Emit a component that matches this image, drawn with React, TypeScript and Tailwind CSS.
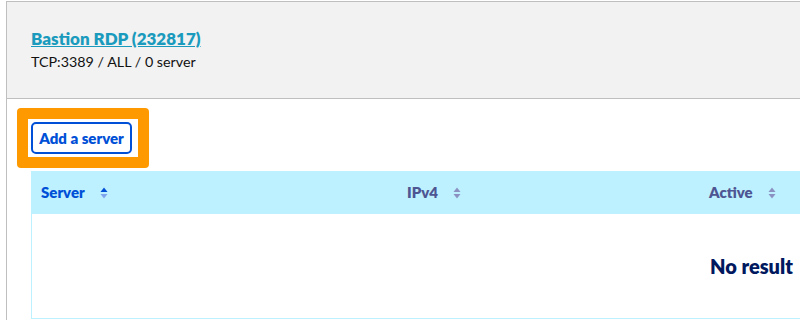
import React from 'react';

const font = { fontFamily: '"Source Sans Pro", Lato, "Liberation Sans", sans-serif' };

function SortIcon({ active }: { active?: boolean }) {
  return (
    <svg width="8" height="12" viewBox="0 0 8 12" className="ml-[15px]">
      <path d="M4 0.5 L7.5 5 H0.5 Z" fill={active ? '#0050d7' : '#8b92c2'} />
      <path d="M4 11.5 L7.5 7 H0.5 Z" fill={active ? '#7ea4ec' : '#8b92c2'} />
    </svg>
  );
}

export default function App() {
  return (
    <div className="h-[320px] w-[800px] overflow-hidden bg-white" style={font}>
      <div className="ml-[6px] mt-px h-[330px] w-[820px] border-l border-t border-[#bfbfbf]">
        {/* Header */}
        <div className="h-[97px] border-b border-[#bfbfbf] bg-[#f2f2f2] pl-[24px] pt-[25px]">
          <a href="#" className="text-[17px] font-extrabold leading-[22px] text-[#1a9bbd] underline">
            Bastion RDP (232817)
          </a>
          <p className="text-[14.3px] leading-[22px] text-[#111]">TCP:3389 / ALL / 0 server</p>
        </div>

        {/* Add button with focus ring */}
        <div className="ml-[10px] mt-[9px] inline-block rounded-[4px] bg-[#ff9900] p-[11px]">
          <div className="bg-white pb-[3px] pl-[3px] pr-[6px] pt-[3px]">
            <button className="h-[32px] w-[101px] rounded-[5px] border-2 border-[#0050d7] text-[15px] font-extrabold text-[#0050d7]">
              Add a server
            </button>
          </div>
        </div>

        {/* Table */}
        <div className="ml-[24px] mt-[3px] h-[148px] border-b border-l border-[#bef1ff]">
          <div className="grid h-[43px] grid-cols-[366px_302px_1fr] items-center bg-[#bef1ff] text-[15px] font-extrabold">
            <div className="flex items-center pl-[9px] text-[#0050d7]">
              Server
              <SortIcon active />
            </div>
            <div className="flex items-center pl-[9px] text-[#4d5592]">
              IPv4
              <SortIcon />
            </div>
            <div className="flex items-center pl-[9px] text-[#4d5592]">
              Active
              <SortIcon />
            </div>
          </div>
          <div className="flex h-[104px] items-center pl-[678px]">
            <span className="text-[20px] font-extrabold text-[#00185e]">No result</span>
          </div>
        </div>
      </div>
    </div>
  );
}
